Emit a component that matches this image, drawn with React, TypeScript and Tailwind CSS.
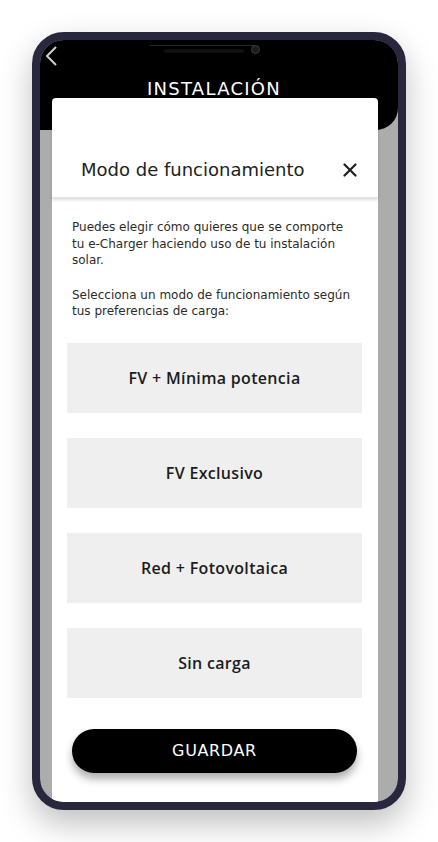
import React from "react";

const font = { fontFamily: '"DejaVu Sans", "Noto Sans", sans-serif' };

function Option({ label }: { label: string }) {
  return (
    <div className="h-[70px] bg-[#efefef] flex items-center justify-center text-[16px] font-semibold tracking-[0.02em] text-[#1c1c1c] font-['Open_Sans',sans-serif]">
      {label}
    </div>
  );
}

export default function App() {
  return (
    <div className="w-[438px] h-[842px] bg-white overflow-hidden pt-[32px] pl-[32px]" style={font}>
      <div className="w-[374px] h-[778px] rounded-[32px] border-[8px] border-[#28273d] bg-[#28273d] shadow-[0_14px_32px_rgba(0,0,0,0.25)] overflow-hidden">
        <div className="relative w-full h-full rounded-[22px] overflow-hidden bg-[#acacac] flex flex-col">
          {/* header */}
          <div className="relative h-[90px] bg-black rounded-br-[22px] shrink-0">
            <svg className="absolute left-[4px] top-[6px]" width="14" height="20" viewBox="0 0 14 20">
              <path d="M12 1 L3 10 L12 19" fill="none" stroke="#cfcfcf" strokeWidth="2" />
            </svg>
            <div className="absolute left-[110px] top-[5px] w-[105px] h-[1px] bg-[#262626]" />
            <div className="absolute left-[124px] top-[9px] w-[80px] h-[4px] bg-[#101010] rounded-sm" />
            <div className="absolute left-[211px] top-[5px] w-[9px] h-[9px] rounded-full bg-[#1c1c1c] border border-[#3a3a3a]" />
            <div className="pt-[35px] text-center text-white text-[18px] tracking-[0.07em] pr-[10px]">
              INSTALACIÓN
            </div>
          </div>
          {/* modal */}
          <div className="relative z-10 -mt-[32px] ml-[12px] w-[326px] flex-1 bg-white rounded-t-[4px] flex flex-col">
            <div className="h-[100px] flex items-end justify-between pl-[29px] pr-[21px] pb-[15px] shadow-[0_2px_3px_rgba(0,0,0,0.14)] border-b border-[#e2e2e2]">
              <span className="text-[18px] text-[#222] leading-[24px]">Modo de funcionamiento</span>
              <svg width="14" height="14" viewBox="0 0 14 14" className="mb-[5px]">
                <path d="M1.5 1.5 L12.5 12.5 M12.5 1.5 L1.5 12.5" stroke="#1f1f1f" strokeWidth="2.2" strokeLinecap="round" />
              </svg>
            </div>
            <div className="pt-[21px] px-[20px] text-[12px] leading-[16.5px] text-[#2b2b2b]">
              <p>Puedes elegir cómo quieres que se comporte tu e-Charger haciendo uso de tu instalación solar.</p>
              <p className="mt-[18px]">Selecciona un modo de funcionamiento según tus preferencias de carga:</p>
            </div>
            <div className="mt-[23px] ml-[15px] mr-[16px] flex flex-col gap-[25px]">
              <Option label="FV + Mínima potencia" />
              <Option label="FV Exclusivo" />
              <Option label="Red + Fotovoltaica" />
              <Option label="Sin carga" />
            </div>
            <div className="mt-[31px] ml-[20px] mr-[21px] h-[44px] rounded-full bg-black text-white flex items-center justify-center text-[16px] tracking-[0.04em] shadow-[0_6px_9px_rgba(0,0,0,0.32)]">
              GUARDAR
            </div>
          </div>
        </div>
      </div>
    </div>
  );
}
